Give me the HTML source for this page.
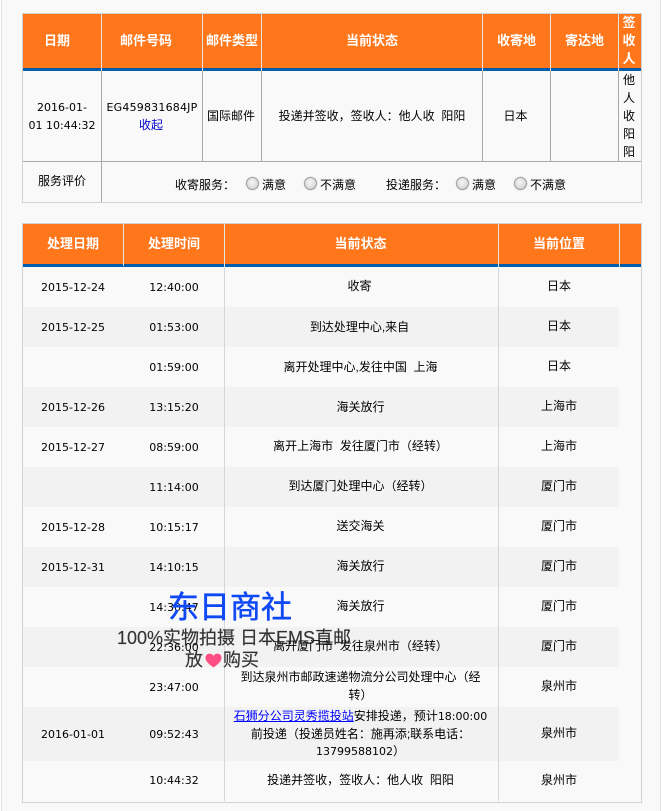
<!DOCTYPE html>
<html lang="zh"><head><meta charset="utf-8"><title>邮件跟踪</title>
<style>
html,body{margin:0;padding:0;background:#f9f9f9}
body{position:relative;width:662px;height:811px;overflow:hidden;font:12px/18px "Liberation Sans","WenQuanYi Zen Hei","Noto Sans CJK SC",sans-serif;color:#000}
.b{position:absolute}
.t{position:absolute;text-align:center;white-space:nowrap;margin-top:1px}
.n{font:11px/18px "DejaVu Sans",sans-serif}
.h{color:#fff;font-weight:bold;font-size:13px}
.r{position:absolute;width:11px;height:11px;border-radius:50%;border:1px solid #a0a0a0;background:radial-gradient(circle at 45% 40%,#f6f6f6 0,#dedede 55%,#bebebe 100%);box-shadow:0 0 0 .5px #d8d8d8}
a{color:#00f}
</style></head><body>
<div class="b" style="left:0;top:0;width:1px;height:811px;background:#fff"></div>
<div class="b" style="left:1px;top:0;width:1px;height:811px;background:#e2e2e2"></div>
<div class="b" style="left:660px;top:0;width:1px;height:811px;background:#e2e2e2"></div>
<div class="b" style="left:661px;top:0;width:1px;height:811px;background:#fff"></div>

<!-- Table 1 -->
<div class="b" style="left:22px;top:13px;width:618px;height:188px;border:1px solid #d2d2d2"></div>
<div class="b" style="left:23px;top:14px;width:618px;height:54px;background:#ff761b"></div>
<div class="b" style="left:23px;top:68px;width:618px;height:3px;background:#005dac"></div>
<div class="b" style="left:23px;top:161px;width:618px;height:1px;background:#a8a8a8"></div>
<div class="b" style="left:101px;top:14px;width:1px;height:57px;background:#e4e4e4"></div>
<div class="b" style="left:202px;top:14px;width:1px;height:57px;background:#e4e4e4"></div>
<div class="b" style="left:261px;top:14px;width:1px;height:57px;background:#e4e4e4"></div>
<div class="b" style="left:482px;top:14px;width:1px;height:57px;background:#e4e4e4"></div>
<div class="b" style="left:550px;top:14px;width:1px;height:57px;background:#e4e4e4"></div>
<div class="b" style="left:618px;top:14px;width:1px;height:57px;background:#e4e4e4"></div>
<div class="b" style="left:101px;top:71px;width:1px;height:131px;background:#a8a8a8"></div>
<div class="b" style="left:202px;top:71px;width:1px;height:90px;background:#a8a8a8"></div>
<div class="b" style="left:261px;top:71px;width:1px;height:90px;background:#a8a8a8"></div>
<div class="b" style="left:482px;top:71px;width:1px;height:90px;background:#a8a8a8"></div>
<div class="b" style="left:550px;top:71px;width:1px;height:90px;background:#a8a8a8"></div>
<div class="b" style="left:618px;top:71px;width:1px;height:90px;background:#a8a8a8"></div>

<div class="t h" style="left:18px;top:31px;width:78px">日期</div>
<div class="t h" style="left:96px;top:31px;width:100px">邮件号码</div>
<div class="t h" style="left:203px;top:31px;width:58px">邮件类型</div>
<div class="t h" style="left:262px;top:31px;width:220px">当前状态</div>
<div class="t h" style="left:483px;top:31px;width:67px">收寄地</div>
<div class="t h" style="left:551px;top:31px;width:67px">寄达地</div>
<div class="t h" style="left:618px;top:13px;width:22px">签<br>收<br>人</div>

<div class="t n" style="left:23px;top:98px;width:78px">2016-01-<br>01 10:44:32</div>
<div class="t n" style="left:102px;top:98px;width:100px;letter-spacing:.2px">EG459831684JP</div>
<div class="t" style="left:101px;top:115px;width:100px;color:#00c">收起</div>
<div class="t" style="left:202px;top:106px;width:58px">国际邮件</div>
<div class="t" style="left:262px;top:106px;width:220px">投递并签收，签收人：他人收&nbsp; 阳阳</div>
<div class="t" style="left:482px;top:106px;width:67px">日本</div>
<div class="t" style="left:618px;top:70px;width:22px">他<br>人<br>收<br>阳<br>阳</div>
<div class="t" style="left:23px;top:171px;width:78px">服务评价</div>
<div class="t" style="left:175px;top:175px">收寄服务：</div>
<div class="r" style="left:246px;top:177px"></div>
<div class="t" style="left:262px;top:175px">满意</div>
<div class="r" style="left:304px;top:177px"></div>
<div class="t" style="left:320px;top:175px">不满意</div>
<div class="t" style="left:386px;top:175px">投递服务：</div>
<div class="r" style="left:456px;top:177px"></div>
<div class="t" style="left:472px;top:175px">满意</div>
<div class="r" style="left:514px;top:177px"></div>
<div class="t" style="left:530px;top:175px">不满意</div>

<!-- Table 2 -->
<div class="b" style="left:22px;top:223px;width:618px;height:578px;border:1px solid #d2d2d2"></div>
<div class="b" style="left:23px;top:224px;width:618px;height:40px;background:#ff761b"></div>
<div class="b" style="left:23px;top:264px;width:618px;height:3px;background:#005dac"></div>
<div class="b" style="left:123px;top:224px;width:1px;height:42px;background:#e4e4e4"></div>
<div class="b" style="left:224px;top:224px;width:1px;height:43px;background:#e4e4e4"></div>
<div class="b" style="left:498px;top:224px;width:1px;height:43px;background:#e4e4e4"></div>
<div class="b" style="left:619px;top:224px;width:1px;height:43px;background:#e4e4e4"></div>
<div class="b" style="left:23px;top:307px;width:596px;height:40px;background:#f2f2f2"></div>
<div class="b" style="left:23px;top:387px;width:596px;height:40px;background:#f2f2f2"></div>
<div class="b" style="left:23px;top:467px;width:596px;height:40px;background:#f2f2f2"></div>
<div class="b" style="left:23px;top:547px;width:596px;height:40px;background:#f2f2f2"></div>
<div class="b" style="left:23px;top:627px;width:596px;height:40px;background:#f2f2f2"></div>
<div class="b" style="left:23px;top:707px;width:596px;height:54px;background:#f2f2f2"></div>
<div class="b" style="left:224px;top:267px;width:1px;height:534px;background:#d6d6d6"></div>
<div class="b" style="left:498px;top:267px;width:1px;height:534px;background:#d6d6d6"></div>

<div class="t h" style="left:23px;top:234px;width:100px">处理日期</div>
<div class="t h" style="left:124px;top:234px;width:100px">处理时间</div>
<div class="t h" style="left:224px;top:234px;width:273px">当前状态</div>
<div class="t h" style="left:499px;top:234px;width:120px">当前位置</div>

<div class="t n" style="left:23px;top:278px;width:100px">2015-12-24</div><div class="t n" style="left:124px;top:278px;width:100px">12:40:00</div><div class="t" style="left:223px;top:276px;width:273px">收寄</div><div class="t" style="left:499px;top:276px;width:120px">日本</div>
<div class="t n" style="left:23px;top:318px;width:100px">2015-12-25</div><div class="t n" style="left:124px;top:318px;width:100px">01:53:00</div><div class="t" style="left:223px;top:317px;width:273px">到达处理中心,来自</div><div class="t" style="left:499px;top:316px;width:120px">日本</div>
<div class="t n" style="left:124px;top:358px;width:100px">01:59:00</div><div class="t" style="left:224px;top:357px;width:273px">离开处理中心,发往中国&nbsp; 上海</div><div class="t" style="left:499px;top:356px;width:120px">日本</div>
<div class="t n" style="left:23px;top:398px;width:100px">2015-12-26</div><div class="t n" style="left:124px;top:398px;width:100px">13:15:20</div><div class="t" style="left:224px;top:397px;width:273px">海关放行</div><div class="t" style="left:499px;top:396px;width:120px">上海市</div>
<div class="t n" style="left:23px;top:438px;width:100px">2015-12-27</div><div class="t n" style="left:124px;top:438px;width:100px">08:59:00</div><div class="t" style="left:224px;top:436px;width:273px">离开上海市&nbsp; 发往厦门市（经转）</div><div class="t" style="left:499px;top:436px;width:120px">上海市</div>
<div class="t n" style="left:124px;top:478px;width:100px">11:14:00</div><div class="t" style="left:224px;top:476px;width:273px">到达厦门处理中心（经转）</div><div class="t" style="left:499px;top:476px;width:120px">厦门市</div>
<div class="t n" style="left:23px;top:518px;width:100px">2015-12-28</div><div class="t n" style="left:124px;top:518px;width:100px">10:15:17</div><div class="t" style="left:224px;top:516px;width:273px">送交海关</div><div class="t" style="left:499px;top:516px;width:120px">厦门市</div>
<div class="t n" style="left:23px;top:558px;width:100px">2015-12-31</div><div class="t n" style="left:124px;top:558px;width:100px">14:10:15</div><div class="t" style="left:224px;top:556px;width:273px">海关放行</div><div class="t" style="left:499px;top:556px;width:120px">厦门市</div>
<div class="t n" style="left:124px;top:598px;width:100px">14:30:47</div><div class="t" style="left:224px;top:596px;width:273px">海关放行</div><div class="t" style="left:499px;top:596px;width:120px">厦门市</div>
<div class="t n" style="left:124px;top:638px;width:100px">22:36:00</div><div class="t" style="left:224px;top:636px;width:273px">离开厦门市&nbsp; 发往泉州市（经转）</div><div class="t" style="left:499px;top:636px;width:120px">厦门市</div>
<div class="t n" style="left:124px;top:678px;width:100px">23:47:00</div><div class="t" style="left:224px;top:667px;width:273px">到达泉州市邮政速递物流分公司处理中心（经<br>转）</div><div class="t" style="left:499px;top:676px;width:120px">泉州市</div>
<div class="t n" style="left:23px;top:725px;width:100px">2016-01-01</div><div class="t n" style="left:124px;top:725px;width:100px">09:52:43</div>
<div class="t" style="left:224px;top:706px;width:273px"><a href="#">石狮分公司灵秀揽投站</a>安排投递，预计<span class="n">18:00:00</span></div>
<div class="t" style="left:224px;top:724px;width:273px">前投递（投递员姓名：施再添;联系电话：</div>
<div class="t" style="left:224px;top:741px;width:273px"><span class="n">13799588102</span>）</div>
<div class="t" style="left:499px;top:723px;width:120px">泉州市</div>
<div class="t n" style="left:124px;top:771px;width:100px">10:44:32</div><div class="t" style="left:224px;top:770px;width:273px">投递并签收，签收人：他人收&nbsp; 阳阳</div><div class="t" style="left:499px;top:770px;width:120px">泉州市</div>

<!-- Overlay -->
<div class="t" style="left:130px;top:589px;width:200px;font-size:31px;line-height:36px;color:#0f48f5;-webkit-text-stroke:.5px #0f48f5">东日商社</div>
<div class="t" style="left:100px;top:626px;width:268px;font-size:18px;line-height:22px;color:rgba(30,30,30,.9);-webkit-text-stroke:.2px rgba(30,30,30,.7)">100%实物拍摄 日本EMS直邮</div>
<div class="t" style="left:185px;top:648px;width:76px;font-size:18px;line-height:22px;text-align:left;color:rgba(30,30,30,.9);-webkit-text-stroke:.2px rgba(30,30,30,.7)">放<svg width="17" height="15" viewBox="0 0 17 15" style="vertical-align:-2px;margin:0 1px 0 2px"><path d="M8.5 14.5C3 10.5 .5 8 .5 4.8 .5 2.3 2.4.6 4.6.6c1.6 0 3 .8 3.9 2.3C9.4 1.4 10.8.6 12.4.6c2.2 0 4.1 1.7 4.1 4.2 0 3.2-2.500 5.7-8 9.7z" fill="#ff4f82"/></svg>购买</div>
</body></html>
